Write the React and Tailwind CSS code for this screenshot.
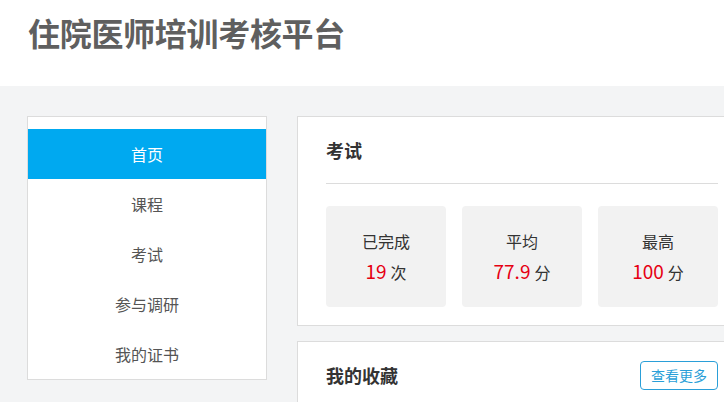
const menu = ['首页', '课程', '考试', '参与调研', '我的证书'];

const stats = [
  { label: '已完成', value: '19', unit: '次' },
  { label: '平均', value: '77.9', unit: '分' },
  { label: '最高', value: '100', unit: '分' },
];

const font = { fontFamily: '"Microsoft YaHei", "Noto Sans CJK SC", "Liberation Sans", sans-serif' };

export default function App() {
  return (
    <div className="w-[724px] h-[402px] overflow-hidden bg-[#f3f4f5]" style={font}>
      <header className="h-[86px] bg-white pl-[28px] pt-[10px]">
        <h1 className="text-[32px] leading-[44px] font-bold text-[#5f5f5f] tracking-[-0.3px]">
          住院医师培训考核平台
        </h1>
      </header>

      <div className="flex items-start gap-[30px] pl-[27px] pt-[30px]">
        <nav className="w-[240px] shrink-0 bg-white border border-[#dcdcdc] pt-[12px]">
          {menu.map((item, i) => (
            <div
              key={item}
              className={
                i === 0
                  ? 'h-[50px] flex items-center justify-center text-[16px] bg-[#00a9f0] text-white'
                  : 'h-[50px] flex items-center justify-center text-[16px] text-[#555]'
              }
            >
              {item}
            </div>
          ))}
        </nav>

        <main className="w-[450px] shrink-0 flex flex-col gap-[15px]">
          <section className="bg-white border border-[#dcdcdc] px-[28px] pb-[18px]">
            <h2 className="h-[67px] flex items-center text-[18px] font-bold text-[#333] border-b border-[#dcdcdc]">
              考试
            </h2>
            <div className="flex gap-[16px] mt-[22px]">
              {stats.map((s) => (
                <div
                  key={s.label}
                  className="w-[120px] h-[101px] rounded-[4px] bg-[#f2f2f2] flex flex-col items-center justify-center"
                >
                  <div className="text-[16px] text-[#333] leading-[24px]">{s.label}</div>
                  <div className="mt-[6px] leading-[24px]">
                    <span className="text-[19px] text-[#e60012]">{s.value}</span>
                    <span className="text-[16px] text-[#333] ml-[4px]">{s.unit}</span>
                  </div>
                </div>
              ))}
            </div>
          </section>

          <section className="bg-white border border-[#dcdcdc] px-[28px] pt-[19px] pb-[20px]">
            <div className="flex items-center justify-between">
              <h2 className="text-[18px] font-bold text-[#333]">我的收藏</h2>
              <button className="w-[78px] h-[29px] rounded-[4px] border border-[#2a9fd8] text-[14px] text-[#2a9fd8] bg-white">
                查看更多
              </button>
            </div>
          </section>
        </main>
      </div>
    </div>
  );
}
